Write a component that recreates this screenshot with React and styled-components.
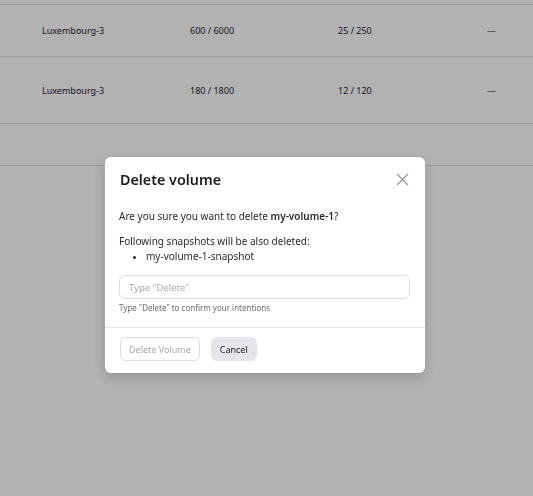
import React from "react";
import styled, { createGlobalStyle } from "styled-components";

const Global = createGlobalStyle`
  html, body { margin: 0; padding: 0; background: #ffffff; }
  body { font-family: "Noto Sans", "Open Sans", sans-serif; width: 533px; height: 496px; overflow: hidden; }
`;

const Table = styled.div`
  margin-top: 4px;
  border-top: 1px solid #e3e3e3;
`;

const Row = styled.div`
  display: grid;
  grid-template-columns: 148px 148px 149px 1fr;
  align-items: center;
  height: ${(p) => p.$h}px;
  border-bottom: 1px solid #e3e3e3;
  box-sizing: border-box;
  padding-left: 42px;
  font-size: 9px;
  color: #1f2430;
`;

const Cell = styled.div`
  white-space: nowrap;
`;

const Overlay = styled.div`
  position: fixed;
  inset: 0;
  background: rgba(0, 0, 0, 0.3);
  display: flex;
  justify-content: center;
  align-items: flex-start;
  padding: 157px 3px 0 0;
`;

const Modal = styled.div`
  width: 320px;
  background: #ffffff;
  border-radius: 6px;
  box-shadow: 0 4px 14px rgba(0, 0, 0, 0.18);
  box-sizing: border-box;
`;

const Header = styled.div`
  display: flex;
  justify-content: space-between;
  align-items: center;
  padding: 11px 16px 0 15px;
  height: 22px;
`;

const Title = styled.h2`
  margin: 0;
  font-size: 14.3px;
  font-weight: 600;
  color: #1c1c1f;
`;

const Close = styled.button`
  border: none;
  background: none;
  padding: 0;
  width: 13px;
  height: 13px;
  display: flex;
  color: #8a8a8f;
  cursor: pointer;
`;

const Body = styled.div`
  padding: 19px 15px 0 14px;
  font-size: 10px;
  color: #2a2a2e;
`;

const P = styled.p`
  margin: 0 0 ${(p) => p.$mb || 0}px 0;
  line-height: 14px;
`;

const List = styled.ul`
  margin: 1px 0 0 0;
  padding-left: 27px;
  line-height: 14px;
  li::marker { font-size: 9px; }
`;

const Input = styled.input`
  display: block;
  margin-top: 12px;
  width: 100%;
  box-sizing: border-box;
  height: 24px;
  border: 1px solid #dcdce0;
  border-radius: 6px;
  padding: 0 9px;
  font-family: inherit;
  font-size: 9.5px;
  color: #2a2a2e;
  outline: none;
  &::placeholder { color: #a9a9ae; }
`;

const Helper = styled.div`
  margin-top: 3px;
  font-size: 8px;
  color: #6c6c72;
  line-height: 12px;
`;

const Footer = styled.div`
  margin-top: 13px;
  border-top: 1px solid #e6e6ea;
  padding: 9px 15px 12px 15px;
  display: flex;
  gap: 11px;
`;

const Button = styled.button`
  height: 24px;
  padding: 0 8px;
  border-radius: 6px;
  font-family: inherit;
  font-size: 9px;
  border: 1px solid ${(p) => (p.$variant === "disabled" ? "#dedee2" : "#e6e5ea")};
  background: ${(p) => (p.$variant === "disabled" ? "#ffffff" : "#e6e5ea")};
  color: ${(p) => (p.$variant === "disabled" ? "#a8a8ad" : "#1c1c1f")};
`;

const rows = [
  { h: 52, a: "Luxembourg-3", b: "600 / 6000", c: "25 / 250", d: "—" },
  { h: 67, a: "Luxembourg-3", b: "180 / 1800", c: "12 / 120", d: "—" },
  { h: 42, a: "", b: "", c: "", d: "" },
];

export default function App() {
  return (
    <>
      <Global />
      <Table>
        {rows.map((r, i) => (
          <Row key={i} $h={r.h}>
            <Cell>{r.a}</Cell>
            <Cell>{r.b}</Cell>
            <Cell>{r.c}</Cell>
            <Cell>{r.d}</Cell>
          </Row>
        ))}
      </Table>
      <Overlay>
        <Modal>
          <Header>
            <Title>Delete volume</Title>
            <Close aria-label="Close">
              <svg width="13" height="13" viewBox="0 0 14 14" fill="none" stroke="currentColor" strokeWidth="1.4" strokeLinecap="round">
                <path d="M1.5 1.5 L12.5 12.5 M12.5 1.5 L1.5 12.5" />
              </svg>
            </Close>
          </Header>
          <Body>
            <P $mb={11}>
              Are you sure you want to delete <b style={{ fontWeight: 600 }}>my-volume-1</b>?
            </P>
            <P>Following snapshots will be also deleted:</P>
            <List>
              <li>my-volume-1-snapshot</li>
            </List>
            <Input placeholder={'Type "Delete"'} />
            <Helper>Type "Delete" to confirm your intentions</Helper>
          </Body>
          <Footer>
            <Button $variant="disabled" disabled>Delete Volume</Button>
            <Button>Cancel</Button>
          </Footer>
        </Modal>
      </Overlay>
    </>
  );
}
